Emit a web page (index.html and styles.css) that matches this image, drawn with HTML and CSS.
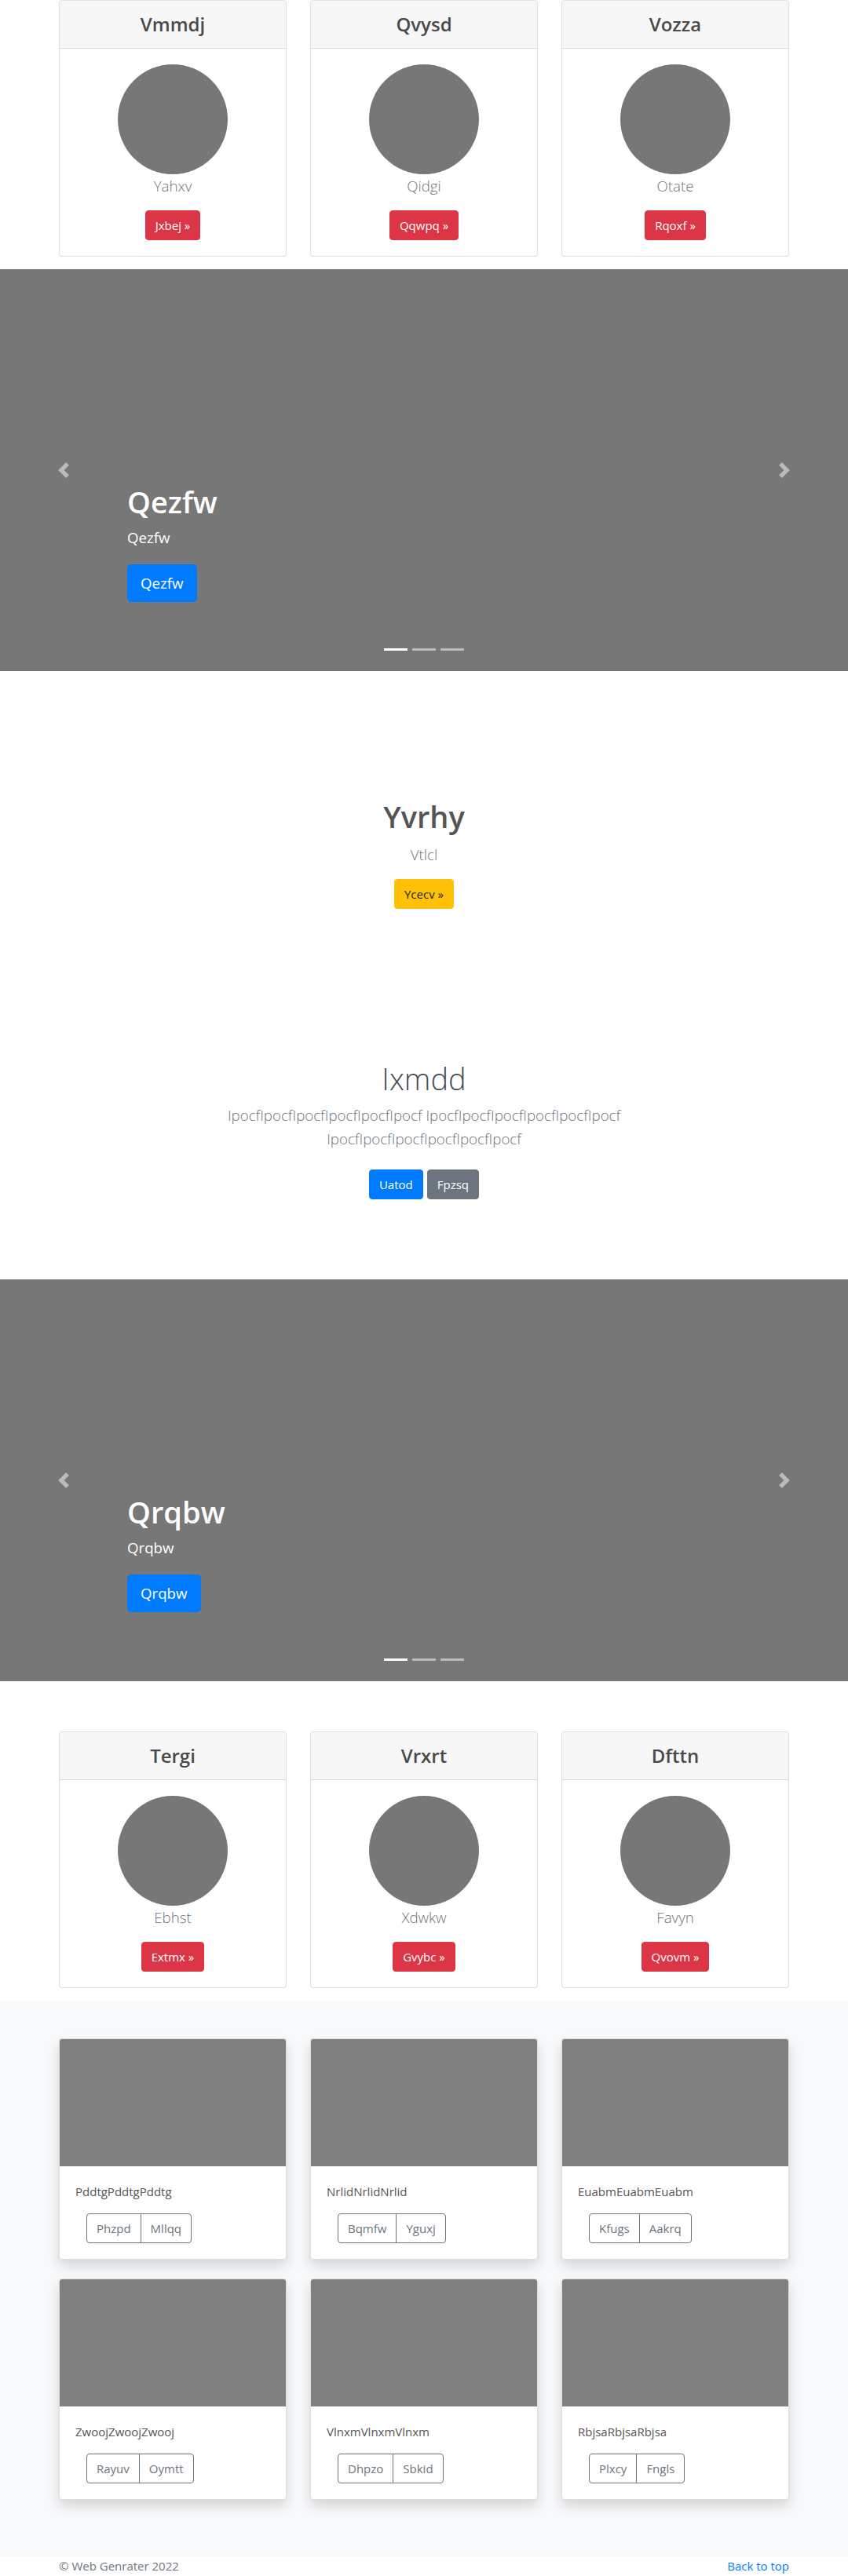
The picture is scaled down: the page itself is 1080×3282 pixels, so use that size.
FILE: index.html
```html
<!DOCTYPE html>
<html lang="en">
<head>
<meta charset="utf-8">
<title>Web Genrater</title>
<link rel="stylesheet" href="styles.css">
</head>
<body>
<div class="container">
  <div class="row">
    <div class="card">
      <div class="card-header"><h4 class="card-title">Vmmdj</h4></div>
      <div class="card-body">
        <div class="avatar"></div>
        <p class="lead muted">Yahxv</p>
        <div class="btn-line"><a class="btn btn-danger" href="#">Jxbej &raquo;</a></div>
      </div>
    </div>
    <div class="card">
      <div class="card-header"><h4 class="card-title">Qvysd</h4></div>
      <div class="card-body">
        <div class="avatar"></div>
        <p class="lead muted">Qidgi</p>
        <div class="btn-line"><a class="btn btn-danger" href="#">Qqwpq &raquo;</a></div>
      </div>
    </div>
    <div class="card">
      <div class="card-header"><h4 class="card-title">Vozza</h4></div>
      <div class="card-body">
        <div class="avatar"></div>
        <p class="lead muted">Otate</p>
        <div class="btn-line"><a class="btn btn-danger" href="#">Rqoxf &raquo;</a></div>
      </div>
    </div>
  </div>
</div>

<div class="carousel">
  <a class="carousel-control control-prev" href="#"><svg width="20" height="20" viewBox="0 0 8 8"><path fill="#fff" d="M5.25 0l-4 4 4 4 1.5-1.5L4.25 4l2.5-2.5L5.25 0z"/></svg></a>
  <a class="carousel-control control-next" href="#"><svg width="20" height="20" viewBox="0 0 8 8"><path fill="#fff" d="M2.75 0l-1.5 1.5L3.75 4l-2.5 2.5L2.75 8l4-4-4-4z"/></svg></a>
  <div class="carousel-caption">
    <h1 class="caption-title">Qezfw</h1>
    <p class="caption-text">Qezfw</p>
    <div class="caption-action"><a class="btn btn-lg btn-primary" href="#">Qezfw</a></div>
  </div>
  <ol class="indicators"><li class="active"></li><li></li><li></li></ol>
</div>

<section class="hero">
  <h1 class="hero-title">Yvrhy</h1>
  <p class="lead muted hero-lead">Vtlcl</p>
  <div class="btn-line"><a class="btn btn-warning" href="#">Ycecv &raquo;</a></div>
</section>

<section class="hero hero-album">
  <div class="narrow">
    <h1 class="hero-title light">Ixmdd</h1>
    <p class="lead muted album-lead">IpocfIpocfIpocfIpocfIpocfIpocf IpocfIpocfIpocfIpocfIpocfIpocf IpocfIpocfIpocfIpocfIpocfIpocf</p>
    <div class="actions">
      <a class="btn btn-primary" href="#">Uatod</a>
      <a class="btn btn-secondary" href="#">Fpzsq</a>
    </div>
  </div>
</section>

<div class="carousel">
  <a class="carousel-control control-prev" href="#"><svg width="20" height="20" viewBox="0 0 8 8"><path fill="#fff" d="M5.25 0l-4 4 4 4 1.5-1.5L4.25 4l2.5-2.5L5.25 0z"/></svg></a>
  <a class="carousel-control control-next" href="#"><svg width="20" height="20" viewBox="0 0 8 8"><path fill="#fff" d="M2.75 0l-1.5 1.5L3.75 4l-2.5 2.5L2.75 8l4-4-4-4z"/></svg></a>
  <div class="carousel-caption">
    <h1 class="caption-title">Qrqbw</h1>
    <p class="caption-text">Qrqbw</p>
    <div class="caption-action"><a class="btn btn-lg btn-primary" href="#">Qrqbw</a></div>
  </div>
  <ol class="indicators"><li class="active"></li><li></li><li></li></ol>
</div>

<div class="container">
  <div class="row">
    <div class="card">
      <div class="card-header"><h4 class="card-title">Tergi</h4></div>
      <div class="card-body">
        <div class="avatar"></div>
        <p class="lead muted">Ebhst</p>
        <div class="btn-line"><a class="btn btn-danger" href="#">Extmx &raquo;</a></div>
      </div>
    </div>
    <div class="card">
      <div class="card-header"><h4 class="card-title">Vrxrt</h4></div>
      <div class="card-body">
        <div class="avatar"></div>
        <p class="lead muted">Xdwkw</p>
        <div class="btn-line"><a class="btn btn-danger" href="#">Gvybc &raquo;</a></div>
      </div>
    </div>
    <div class="card">
      <div class="card-header"><h4 class="card-title">Dfttn</h4></div>
      <div class="card-body">
        <div class="avatar"></div>
        <p class="lead muted">Favyn</p>
        <div class="btn-line"><a class="btn btn-danger" href="#">Qvovm &raquo;</a></div>
      </div>
    </div>
  </div>
</div>

<div class="album">
  <div class="container">
    <div class="row album-row">
      <div class="album-card">
        <div class="thumb"></div>
        <div class="album-body">
          <p class="card-text">PddtgPddtgPddtg</p>
          <div class="btn-group"><a class="btn btn-outline" href="#">Phzpd</a><a class="btn btn-outline" href="#">Mllqq</a></div>
        </div>
      </div>
      <div class="album-card">
        <div class="thumb"></div>
        <div class="album-body">
          <p class="card-text">NrlidNrlidNrlid</p>
          <div class="btn-group"><a class="btn btn-outline" href="#">Bqmfw</a><a class="btn btn-outline" href="#">Yguxj</a></div>
        </div>
      </div>
      <div class="album-card">
        <div class="thumb"></div>
        <div class="album-body">
          <p class="card-text">EuabmEuabmEuabm</p>
          <div class="btn-group"><a class="btn btn-outline" href="#">Kfugs</a><a class="btn btn-outline" href="#">Aakrq</a></div>
        </div>
      </div>
      <div class="album-card">
        <div class="thumb"></div>
        <div class="album-body">
          <p class="card-text">ZwoojZwoojZwooj</p>
          <div class="btn-group"><a class="btn btn-outline" href="#">Rayuv</a><a class="btn btn-outline" href="#">Oymtt</a></div>
        </div>
      </div>
      <div class="album-card">
        <div class="thumb"></div>
        <div class="album-body">
          <p class="card-text">VlnxmVlnxmVlnxm</p>
          <div class="btn-group"><a class="btn btn-outline" href="#">Dhpzo</a><a class="btn btn-outline" href="#">Sbkid</a></div>
        </div>
      </div>
      <div class="album-card">
        <div class="thumb"></div>
        <div class="album-body">
          <p class="card-text">RbjsaRbjsaRbjsa</p>
          <div class="btn-group"><a class="btn btn-outline" href="#">Plxcy</a><a class="btn btn-outline" href="#">Fngls</a></div>
        </div>
      </div>
    </div>
  </div>
</div>

<footer class="footer">
  <div class="container footer-inner">
    <span class="muted">&copy; Web Genrater 2022</span>
    <a class="back-top" href="#">Back to top</a>
  </div>
</footer>
</body>
</html>
```

FILE: styles.css
```css
* { box-sizing: border-box; }
html, body { margin: 0; padding: 0; }
body {
  font-family: "Open Sans", "Noto Sans", "Liberation Sans", sans-serif;
  font-size: 15px;
  line-height: 1.5;
  color: #212529;
  background: #fff;
}
h1, h4, p { margin: 0; }
a { text-decoration: none; }

.container {
  width: 960px;
  margin: 0 auto;
  padding: 0 15px;
}
.row {
  display: grid;
  grid-template-columns: repeat(3, 1fr);
  column-gap: 30px;
}

/* marketing cards */
.card {
  border: 1px solid rgba(0,0,0,.125);
  border-radius: 4px;
  background: #fff;
  margin-bottom: 16px;
  text-align: center;
  overflow: hidden;
}
.card-header {
  background: #f7f7f7;
  border-bottom: 1px solid rgba(0,0,0,.125);
  padding: 15px 20px;
}
.card-title {
  font-size: 24px;
  line-height: 30px;
  font-weight: 600;
  color: #4a4a4a;
}
.card-body { padding: 20px; }
.avatar {
  width: 140px;
  height: 140px;
  border-radius: 50%;
  background: #777;
  margin: 0 auto;
}
.lead {
  font-size: 18.7px;
  line-height: 30px;
  font-weight: 300;
  margin-bottom: 16px;
}
.muted { color: #6c757d; }

.btn-line { display: flex; justify-content: center; }
.btn {
  display: inline-block;
  font-size: 15px;
  line-height: 24px;
  padding: 6px 12px;
  border: 1px solid transparent;
  border-radius: 4px;
  text-align: center;
}
.btn-lg {
  font-size: 18.7px;
  line-height: 30px;
  padding: 8px 16px;
  border-radius: 5px;
}
.btn-danger { background: #dc3545; border-color: #dc3545; color: #fff; }
.btn-primary { background: #007bff; border-color: #007bff; color: #fff; }
.btn-secondary { background: #6c757d; border-color: #6c757d; color: #fff; }
.btn-warning { background: #ffc107; border-color: #ffc107; color: #212529; }

/* carousel */
.carousel {
  position: relative;
  height: 512px;
  background: #777;
  margin-bottom: 64px;
}
.carousel-control {
  position: absolute;
  top: 0;
  bottom: 0;
  width: 15%;
  display: flex;
  align-items: center;
  justify-content: center;
  opacity: .5;
}
.control-prev { left: 0; }
.control-next { right: 0; }
.carousel-caption {
  position: absolute;
  left: 15%;
  right: 15%;
  bottom: 48px;
  padding: 20px 0;
  color: #fff;
  display: flex;
  flex-direction: column;
  align-items: flex-start;
}
.caption-title {
  font-size: 38px;
  line-height: 48px;
  font-weight: 600;
  margin-bottom: 8px;
}
.caption-text {
  font-size: 18.7px;
  line-height: 28px;
  margin-bottom: 20px;
}
.caption-action { margin-bottom: 20px; display: flex; }
.indicators {
  position: absolute;
  left: 15%;
  right: 15%;
  bottom: 26px;
  margin: 0;
  padding: 0;
  list-style: none;
  display: flex;
  justify-content: center;
  gap: 6px;
}
.indicators li {
  width: 30px;
  height: 3px;
  background: #fff;
  opacity: .5;
}
.indicators li.active { opacity: 1; }

/* hero sections */
.hero {
  text-align: center;
  padding: 97px 0 96px;
}
.hero-title {
  font-size: 38px;
  line-height: 48px;
  font-weight: 600;
  color: #555;
  margin-bottom: 10px;
}
.hero-title.light {
  font-weight: 300;
  color: #454d55;
  margin-bottom: 8px;
}
.hero-lead { margin-bottom: 16px; }
.hero-album { padding: 96px 0 94px; }
.narrow { width: 640px; margin: 0 auto; padding: 0 15px; }
.album-lead { margin-bottom: 16px; }
.actions {
  display: flex;
  justify-content: center;
  gap: 5px;
  padding: 8px 0;
}

/* album */
.album {
  background: #f8f9fa;
  padding: 48px 0 72px;
}
.album-row { row-gap: 24px; }
.album-card {
  background: #fff;
  border: 1px solid rgba(0,0,0,.125);
  border-radius: 4px;
  overflow: hidden;
  box-shadow: 0 8px 16px rgba(0,0,0,.15);
}
.thumb {
  height: 162px;
  background: #808080;
}
.album-body { padding: 20px; }
.card-text {
  font-size: 15px;
  line-height: 24px;
  color: #555;
  margin-bottom: 16px;
}
.btn-group {
  display: flex;
  margin-left: 14px;
}
.btn-outline {
  color: #6c757d;
  border-color: #6c757d;
  background: transparent;
}
.btn-group .btn-outline:first-child { border-top-right-radius: 0; border-bottom-right-radius: 0; }
.btn-group .btn-outline + .btn-outline { margin-left: -1px; border-top-left-radius: 0; border-bottom-left-radius: 0; }

/* footer */
.footer { padding: 0 0 24px; }
.footer-inner {
  display: flex;
  justify-content: space-between;
  line-height: 24px;
  font-size: 15px;
}
.back-top { color: #007bff; }
```
